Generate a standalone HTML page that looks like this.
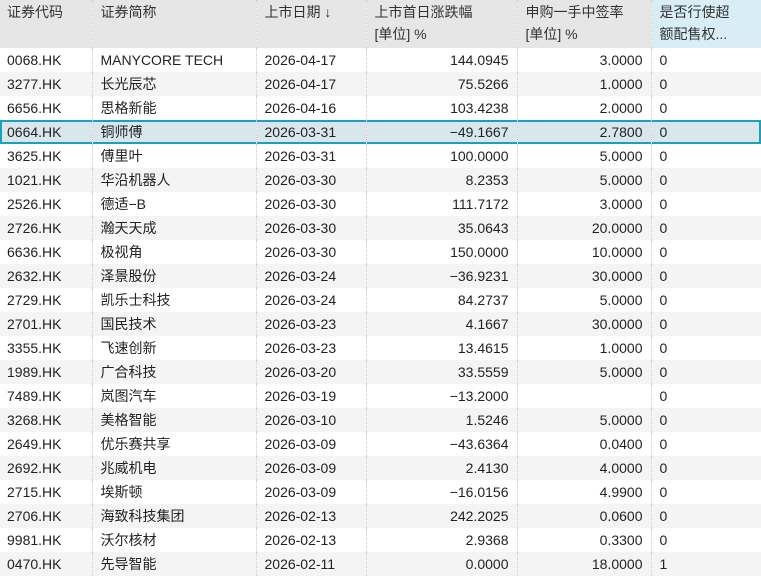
<!DOCTYPE html><html><head><meta charset="utf-8"><style>
body{margin:0;background:#fff;font-family:"Liberation Sans","Noto Sans CJK SC",sans-serif;font-size:14px;color:#222}
table{border-collapse:collapse;table-layout:fixed;width:761px}
td,th{padding:0 8px;height:24px;line-height:20px;white-space:nowrap;overflow:hidden;border-right:1px dotted #c8c8c8;box-sizing:border-box}
td:first-child,th:first-child{padding-left:7px}
th{height:48px;background:#e6e6e6;font-weight:normal;text-align:left;vertical-align:top;line-height:22px;padding-top:1px;color:#333}
th.l{background:#d8edf5}
td.r{text-align:right}
tr:nth-child(even) td{background:#f4f4f4}
tr.sel td{background:#d9e7ec;box-shadow:inset 0 2px #1aa0b8,inset 0 -2px #1aa0b8}
tr.sel td:first-child{box-shadow:inset 0 2px #1aa0b8,inset 0 -2px #1aa0b8,inset 2px 0 #1aa0b8}
tr.sel td:last-child{box-shadow:inset 0 2px #1aa0b8,inset 0 -2px #1aa0b8,inset -2px 0 #1aa0b8}
</style></head><body><table>
<colgroup><col style="width:92px"><col style="width:164px"><col style="width:110px"><col style="width:151px"><col style="width:134px"><col style="width:110px"></colgroup>
<thead><tr><th>证券代码</th><th>证券简称</th><th>上市日期 ↓</th><th>上市首日涨跌幅<br>[单位] %</th><th>申购一手中签率<br>[单位] %</th><th class="l">是否行使超<br>额配售权...</th></tr></thead>
<tbody>
<tr><td>0068.HK</td><td>MANYCORE TECH</td><td>2026-04-17</td><td class="r">144.0945</td><td class="r">3.0000</td><td>0</td></tr>
<tr><td>3277.HK</td><td>长光辰芯</td><td>2026-04-17</td><td class="r">75.5266</td><td class="r">1.0000</td><td>0</td></tr>
<tr><td>6656.HK</td><td>思格新能</td><td>2026-04-16</td><td class="r">103.4238</td><td class="r">2.0000</td><td>0</td></tr>
<tr class="sel"><td>0664.HK</td><td>铜师傅</td><td>2026-03-31</td><td class="r">−49.1667</td><td class="r">2.7800</td><td>0</td></tr>
<tr><td>3625.HK</td><td>傅里叶</td><td>2026-03-31</td><td class="r">100.0000</td><td class="r">5.0000</td><td>0</td></tr>
<tr><td>1021.HK</td><td>华沿机器人</td><td>2026-03-30</td><td class="r">8.2353</td><td class="r">5.0000</td><td>0</td></tr>
<tr><td>2526.HK</td><td>德适−B</td><td>2026-03-30</td><td class="r">111.7172</td><td class="r">3.0000</td><td>0</td></tr>
<tr><td>2726.HK</td><td>瀚天天成</td><td>2026-03-30</td><td class="r">35.0643</td><td class="r">20.0000</td><td>0</td></tr>
<tr><td>6636.HK</td><td>极视角</td><td>2026-03-30</td><td class="r">150.0000</td><td class="r">10.0000</td><td>0</td></tr>
<tr><td>2632.HK</td><td>泽景股份</td><td>2026-03-24</td><td class="r">−36.9231</td><td class="r">30.0000</td><td>0</td></tr>
<tr><td>2729.HK</td><td>凯乐士科技</td><td>2026-03-24</td><td class="r">84.2737</td><td class="r">5.0000</td><td>0</td></tr>
<tr><td>2701.HK</td><td>国民技术</td><td>2026-03-23</td><td class="r">4.1667</td><td class="r">30.0000</td><td>0</td></tr>
<tr><td>3355.HK</td><td>飞速创新</td><td>2026-03-23</td><td class="r">13.4615</td><td class="r">1.0000</td><td>0</td></tr>
<tr><td>1989.HK</td><td>广合科技</td><td>2026-03-20</td><td class="r">33.5559</td><td class="r">5.0000</td><td>0</td></tr>
<tr><td>7489.HK</td><td>岚图汽车</td><td>2026-03-19</td><td class="r">−13.2000</td><td class="r"></td><td>0</td></tr>
<tr><td>3268.HK</td><td>美格智能</td><td>2026-03-10</td><td class="r">1.5246</td><td class="r">5.0000</td><td>0</td></tr>
<tr><td>2649.HK</td><td>优乐赛共享</td><td>2026-03-09</td><td class="r">−43.6364</td><td class="r">0.0400</td><td>0</td></tr>
<tr><td>2692.HK</td><td>兆威机电</td><td>2026-03-09</td><td class="r">2.4130</td><td class="r">4.0000</td><td>0</td></tr>
<tr><td>2715.HK</td><td>埃斯顿</td><td>2026-03-09</td><td class="r">−16.0156</td><td class="r">4.9900</td><td>0</td></tr>
<tr><td>2706.HK</td><td>海致科技集团</td><td>2026-02-13</td><td class="r">242.2025</td><td class="r">0.0600</td><td>0</td></tr>
<tr><td>9981.HK</td><td>沃尔核材</td><td>2026-02-13</td><td class="r">2.9368</td><td class="r">0.3300</td><td>0</td></tr>
<tr><td>0470.HK</td><td>先导智能</td><td>2026-02-11</td><td class="r">0.0000</td><td class="r">18.0000</td><td>1</td></tr>
</tbody></table></body></html>
